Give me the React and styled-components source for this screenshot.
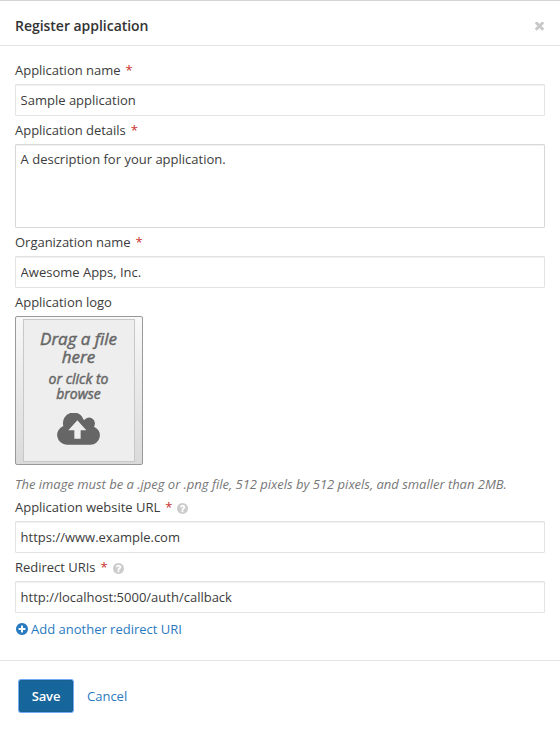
import React from "react";
import styled, { createGlobalStyle, css } from "styled-components";

const GlobalStyle = createGlobalStyle`
  * { box-sizing: border-box; }
  body { margin: 0; background: #fff; }
`;

const Dialog = styled.form`
  height: 731px;
  display: flex;
  flex-direction: column;
  border-top: 1px solid #d5d5d5;
  background: #fff;
  color: #3c3c3c;
  font: 13px/20px "Open Sans", sans-serif;
`;

const Header = styled.header`
  height: 45px;
  padding: 5px 15px 0;
  display: flex;
  align-items: center;
  justify-content: space-between;
  border-bottom: 1px solid #e3e3e3;
`;

const Title = styled.h1`
  margin: 0;
  font-size: 14px;
  line-height: 20px;
  font-weight: 600;
  letter-spacing: -0.03px;
  color: #333;
`;

const CloseButton = styled.button`
  display: flex;
  padding: 0;
  margin: 2px 1px 0 0;
  border: 0;
  background: none;
  color: #c8c8c8;
`;

const Body = styled.main`
  height: 615px;
  padding: 14px 15px 0;
  border-bottom: 1px solid #e3e3e3;
`;

const Field = styled.div`
  display: flex;
  flex-direction: column;
  margin-bottom: 4px;
`;

const Label = styled.label`
  height: 24px;
  display: flex;
  align-items: flex-start;
  letter-spacing: -0.02px;
`;

const Required = styled.span`
  margin-left: 5px;
  color: #c9302c;
`;

const Help = styled.span`
  display: flex;
  margin: 6px 0 0 5px;
  color: #ccc;
`;

const control = css`
  width: 100%;
  margin: 0;
  border: 1px solid #e3e3e3;
  border-radius: 1px;
  outline: 0;
  background: #fff;
  box-shadow: inset 0 1px 1px rgba(0, 0, 0, 0.06);
  color: #3c3c3c;
  font: inherit;
`;

const Input = styled.input`
  ${control}
  height: 32px;
  padding: 0 4.6px;
`;

const TextArea = styled.textarea`
  ${control}
  display: block;
  height: 84px;
  padding: 4px 4.6px;
  resize: none;
  border-color: #d8d8d8;
`;

const DropButton = styled.button`
  width: 128px;
  height: 149px;
  padding: 2px 7px;
  display: flex;
  border: 1px solid #999;
  border-radius: 2px;
  background: linear-gradient(#f8f8f8, #dadada);
  font-family: inherit;
`;

const DropArea = styled.span`
  flex: 1;
  height: 143px;
  padding: 10px 1px 0 0;
  display: flex;
  flex-direction: column;
  align-items: center;
  border: 1px solid #c8c8c8;
  background: #eee;
  color: #666;
  font-style: italic;
  font-weight: 400;
  -webkit-text-stroke: 0.45px #666;
`;

const DropTitle = styled.span`
  width: 90px;
  font-size: 17px;
  line-height: 18px;
  letter-spacing: -0.04px;
`;

const DropHint = styled.span`
  width: 70px;
  margin: 5px 0 12px;
  font-size: 14px;
  line-height: 15px;
  letter-spacing: 0;
`;

const Note = styled.p`
  margin: 9px 0 -1px;
  color: #777;
  font-style: italic;
  letter-spacing: -0.015px;
`;

const AddLink = styled.a`
  display: flex;
  align-items: center;
  gap: 3px;
  padding: 2px 0 0 1px;
  color: #2a7abf;
`;

const Footer = styled.footer`
  display: flex;
  align-items: center;
  gap: 14px;
  padding: 19px 19px 0;
`;

const SaveButton = styled.button`
  width: 54px;
  height: 32px;
  padding: 0;
  border: 1px solid #15608f;
  border-radius: 2px;
  background: #17669b;
  box-shadow: 0 0 0 1px #74a9f3;
  color: #fff;
  font: 600 13px/20px "Open Sans", sans-serif;
  letter-spacing: -0.1px;
`;

const CancelLink = styled.a`
  color: #2a7abf;
`;

const disc =
  "M1664 896q0 209-103 385.500t-279.500 279.500-385.500 103-385.500-103-279.500-279.500-103-385.500 103-385.500 279.500-279.500 385.500-103 385.500 103 279.500 279.500 103 385.500z";

const icons = {
  close: {
    box: "302 434 1188 1188",
    d: "M1490 1322q0 40-28 68l-136 136q-28 28-68 28t-68-28l-294-294-294 294q-28 28-68 28t-68-28l-136-136q-28-28-28-68t28-68l294-294-294-294q-28-28-28-68t28-68l136-136q28-28 68-28t68 28l294 294 294-294q28-28 68-28t68 28l136 136q28 28 28 68t-28 68l-294 294 294 294q28 28 28 68z",
  },
  upload: {
    box: "0 0 129 96",
    d: "M29 95A29 29 0 0 1 19 39A32 32 0 0 1 81 22A17.5 17.5 0 0 1 111 41A28 28 0 0 1 101 95ZM61 22L34 52H52V77H71V52H88Z",
  },
  help: {
    box: "128 128 1536 1536",
    d:
      "M1024 1376v-192q0-14-9-23t-23-9h-192q-14 0-23 9t-9 23v192q0 14 9 23t23 9h192q14 0 23-9t9-23zM1280 704q0-88-55.500-163t-138.500-116-170-41q-243 0-371 213-15 24 8 42l132 100q7 6 19 6 16 0 25-12 53-68 86-92 34-24 86-24 48 0 85.500 26t37.500 59q0 38-20 61t-68 45q-63 28-115.500 86.500t-52.500 125.500v36q0 14 9 23t23 9h192q14 0 23-9t9-23q0-19 21.500-49.500t54.500-49.500q32-18 49-28.500t46-35 44.500-48 28-60.500 12.500-81z" +
      disc,
  },
  plus: {
    box: "128 128 1536 1536",
    d:
      "M1344 960v-128q0-26-19-45t-45-19h-256v-256q0-26-19-45t-45-19h-128q-26 0-45 19t-19 45v256h-256q-26 0-45 19t-19 45v128q0 26 19 45t45 19h256v256q0 26 19 45t45 19h128q26 0 45-19t19-45v-256h256q26 0 45-19t19-45z" +
      disc,
  },
};

function Icon({ name, width, height = width }) {
  const { box, d } = icons[name];
  return (
    <svg width={width} height={height} viewBox={box} fill="currentColor" stroke="none" aria-hidden="true">
      <path fillRule="evenodd" d={d} />
    </svg>
  );
}

function FieldLabel({ children, required, help }) {
  return (
    <Label>
      {children}
      {required && <Required>*</Required>}
      {help && (
        <Help>
          <Icon name="help" width={11} />
        </Help>
      )}
    </Label>
  );
}

function TextField({ label, value, help }) {
  return (
    <Field>
      <FieldLabel required help={help}>{label}</FieldLabel>
      <Input defaultValue={value} spellCheck={false} />
    </Field>
  );
}

export default function App() {
  return (
    <>
      <GlobalStyle />
      <Dialog onSubmit={(e) => e.preventDefault()}>
        <Header>
          <Title>Register application</Title>
          <CloseButton type="button" aria-label="Close">
            <Icon name="close" width={9} />
          </CloseButton>
        </Header>
        <Body>
          <TextField label="Application name" value="Sample application" />
          <Field>
            <FieldLabel required>Application details</FieldLabel>
            <TextArea defaultValue="A description for your application." spellCheck={false} />
          </Field>
          <TextField label="Organization name" value="Awesome Apps, Inc." />
          <Field>
            <FieldLabel>Application logo</FieldLabel>
            <DropButton type="button">
              <DropArea>
                <DropTitle>Drag a file here</DropTitle>
                <DropHint>or click to browse</DropHint>
                <Icon name="upload" width={43} height={32} />
              </DropArea>
            </DropButton>
            <Note>The image must be a .jpeg or .png file, 512 pixels by 512 pixels, and smaller than 2MB.</Note>
          </Field>
          <TextField label="Application website URL" value="https://www.example.com" help />
          <TextField label="Redirect URIs" value="http://localhost:5000/auth/callback" help />
          <AddLink>
            <Icon name="plus" width={12} />
            Add another redirect URI
          </AddLink>
        </Body>
        <Footer>
          <SaveButton type="submit">Save</SaveButton>
          <CancelLink>Cancel</CancelLink>
        </Footer>
      </Dialog>
    </>
  );
}
